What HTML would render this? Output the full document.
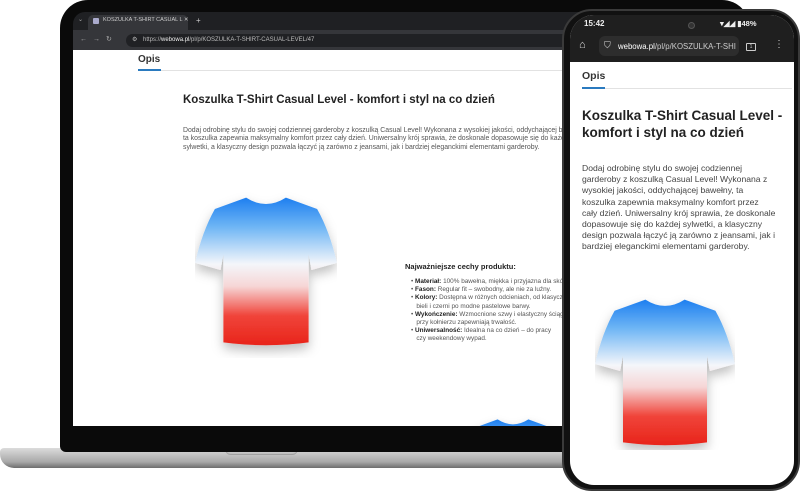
<!DOCTYPE html>
<html style="overflow:hidden"><head><meta charset="utf-8"><style>
*{margin:0;padding:0;box-sizing:border-box}
html,body{width:800px;height:491px;overflow:hidden}
body{background:#fff;position:relative;font-family:"Liberation Sans",sans-serif;color:#222}
.abs{position:absolute}
</style></head><body>
<svg width="0" height="0" style="position:absolute;left:0;top:0"><defs>
<linearGradient id="tg" x1="0" y1="0" x2="0" y2="1">
<stop offset="0" stop-color="#1e7ff0"/><stop offset="0.2" stop-color="#6fb6f5"/><stop offset="0.45" stop-color="#f4f6fa"/><stop offset="0.6" stop-color="#f6d6d6"/><stop offset="0.8" stop-color="#f0443a"/><stop offset="1" stop-color="#e8241a"/></linearGradient>
<filter id="sh" x="-20%" y="-20%" width="140%" height="140%"><feDropShadow dx="0" dy="4" stdDeviation="4" flood-opacity="0.25"/></filter>
<symbol id="tee" viewBox="0 0 100 110"><path d="M36 4 Q50 13 64 4 L86 12 Q95 28 100 50 L82 55 L80 44 L80 106 Q50 110 20 106 L20 44 L18 55 L0 50 Q5 28 14 12 Z" fill="url(#tg)" filter="url(#sh)"/></symbol>
</defs></svg>

<div class="abs" style="left:0;top:448px;width:580px;height:20px;background:linear-gradient(#dcdcdc,#a8a8a8 70%,#6d6d6d);border-radius:4px 0 0 14px"></div>
<div class="abs" style="left:225px;top:449px;width:73px;height:6px;background:#c5c5c5;border-radius:0 0 6px 6px;box-shadow:inset 0 -1px 1px #999"></div>
<div class="abs" style="left:60px;top:0;width:690px;height:452px;background:#0a0a0a;border-radius:28px 28px 6px 6px"></div>
<div class="abs" style="left:73px;top:12px;width:600px;height:38px;background:#1f2023;border-radius:12px 0 0 0"></div>
<div class="abs" style="left:88px;top:15px;width:100px;height:15px;background:#35363a;border-radius:5px 5px 0 0"></div>
<div class="abs" style="left:93px;top:18px;width:6px;height:6px;background:#aac;border-radius:1px"></div>
<div class="abs" style="left:103px;top:17px;font-size:5.5px;color:#ccc">KOSZULKA T-SHIRT CASUAL L ✕</div>
<div class="abs" style="left:196px;top:16px;font-size:8px;color:#ccc">+</div>
<div class="abs" style="left:78px;top:16px;font-size:6px;color:#aaa">⌄</div>
<div class="abs" style="left:73px;top:30px;width:600px;height:20px;background:#35363a"></div>
<div class="abs" style="left:80px;top:35px;font-size:7px;color:#aaa;letter-spacing:6px">←→↻</div>
<div class="abs" style="left:126px;top:34px;width:470px;height:13px;background:#202124;border-radius:7px"></div>
<div class="abs" style="left:132px;top:36px;font-size:6px;color:#bbb">⚙</div>
<div class="abs" style="left:143px;top:37px;font-size:6px;color:#bbb">https://<span style="color:#eee">webowa.pl</span>/pl/p/KOSZULKA-T-SHIRT-CASUAL-LEVEL/47</div>
<div class="abs" style="left:73px;top:50px;width:600px;height:376px;background:#fff;overflow:hidden">
 <div class="abs" style="left:65px;top:4px;font-size:10px;font-weight:bold;color:#333">Opis</div>
 <div class="abs" style="left:65px;top:20px;width:440px;height:1px;background:#e2e2e2"></div>
 <div class="abs" style="left:65px;top:19px;width:23px;height:2px;background:#2a7abf"></div>
 <div class="abs" style="left:110px;top:44px;font-size:11.5px;font-weight:bold;color:#222">Koszulka T-Shirt Casual Level - komfort i styl na co dzień</div>
 <div class="abs" style="left:110px;top:77px;font-size:6.9px;line-height:8.4px;color:#555;white-space:nowrap">Dodaj odrobinę stylu do swojej codziennej garderoby z koszulką Casual Level! Wykonana z wysokiej jakości, oddychającej bawełny,<br>ta koszulka zapewnia maksymalny komfort przez cały dzień. Uniwersalny krój sprawia, że doskonale dopasowuje się do każdej<br>sylwetki, a klasyczny design pozwala łączyć ją zarówno z jeansami, jak i bardziej eleganckimi elementami garderoby.</div>
 <svg class="abs" style="left:122px;top:132px" width="142" height="176"><use href="#tee" width="142" height="176"/></svg>
 <div class="abs" style="left:332px;top:212px;font-size:7.5px;font-weight:bold;color:#222">Najważniejsze cechy produktu:</div>
 <div class="abs" style="left:338px;top:228px;font-size:6.4px;line-height:8.2px;color:#555;white-space:nowrap">
 • <b style="color:#222">Materiał:</b> 100% bawełna, miękka i przyjazna dla skóry.<br>
 • <b style="color:#222">Fason:</b> Regular fit – swobodny, ale nie za luźny.<br>
 • <b style="color:#222">Kolory:</b> Dostępna w różnych odcieniach, od klasycznej<br>&nbsp;&nbsp;&nbsp;bieli i czerni po modne pastelowe barwy.<br>
 • <b style="color:#222">Wykończenie:</b> Wzmocnione szwy i elastyczny ściągacz<br>&nbsp;&nbsp;&nbsp;przy kołnierzu zapewniają trwałość.<br>
 • <b style="color:#222">Uniwersalność:</b> Idealna na co dzień – do pracy<br>&nbsp;&nbsp;&nbsp;czy weekendowy wypad.</div>
 <svg class="abs" style="left:385px;top:358px" width="110" height="135"><use href="#tee" width="110" height="135"/></svg>
</div>
<div class="abs" style="left:562px;top:9px;width:238px;height:482px;background:#111;border-radius:30px;border:2px solid #3a3a3a"></div>
<div class="abs" style="left:570px;top:15px;width:224px;height:470px;background:#fff;border-radius:24px;overflow:hidden">
 <div class="abs" style="left:0;top:0;width:224px;height:47px;background:#1f1f1f"></div>
 <div class="abs" style="left:14px;top:4px;font-size:8px;font-weight:bold;color:#eee">15:42</div>
 <div class="abs" style="left:118px;top:7px;width:7px;height:7px;background:#333;border-radius:50%;border:1px solid #555"></div>
 <div class="abs" style="left:150px;top:4px;font-size:7.5px;font-weight:bold;color:#eee">▾◢◢ ▮48%</div>
 <div class="abs" style="left:9px;top:24px;font-size:11px;color:#ddd">⌂</div>
 <div class="abs" style="left:29px;top:21px;width:140px;height:20px;background:#2d2d2d;border-radius:6px"></div>
 <div class="abs" style="left:34px;top:25px;font-size:9px;color:#ddd">⛉</div>
 <div class="abs" style="left:48px;top:27px;width:118px;overflow:hidden;white-space:nowrap;font-size:7.8px;color:#ccc"><span style="color:#fff">webowa.pl</span>/pl/p/KOSZULKA-T-SHIRT</div>
 <div class="abs" style="left:176px;top:28px;width:10px;height:8px;border:1px solid #ccc;border-radius:1px;font-size:5px;color:#ccc;text-align:center;line-height:6px">1</div>
 <div class="abs" style="left:204px;top:24px;font-size:10px;color:#ccc">⋮</div>
 <div class="abs" style="left:12px;top:55px;font-size:10.5px;font-weight:bold;color:#333">Opis</div>
 <div class="abs" style="left:12px;top:73px;width:210px;height:1px;background:#e2e2e2"></div>
 <div class="abs" style="left:12px;top:72px;width:23px;height:2px;background:#2a7abf"></div>
 <div class="abs" style="left:12px;top:92px;font-size:13.5px;line-height:17px;font-weight:bold;color:#222">Koszulka T-Shirt Casual Level -<br>komfort i styl na co dzień</div>
 <div class="abs" style="left:12px;top:148px;font-size:8.6px;line-height:11.2px;color:#444;white-space:nowrap">Dodaj odrobinę stylu do swojej codziennej<br>garderoby z koszulką Casual Level! Wykonana z<br>wysokiej jakości, oddychającej bawełny, ta<br>koszulka zapewnia maksymalny komfort przez<br>cały dzień. Uniwersalny krój sprawia, że doskonale<br>dopasowuje się do każdej sylwetki, a klasyczny<br>design pozwala łączyć ją zarówno z jeansami, jak i<br>bardziej eleganckimi elementami garderoby.</div>
 <svg class="abs" style="left:25px;top:277px" width="140" height="158"><use href="#tee" width="140" height="158"/></svg>
</div>
</body></html>
